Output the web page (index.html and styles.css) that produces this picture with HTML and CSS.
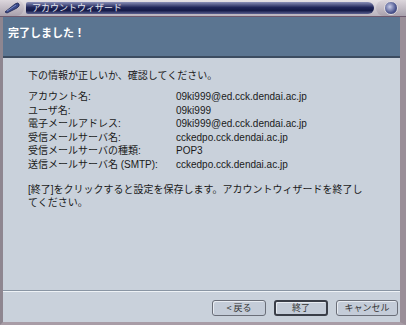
FILE: index.html
```html
<!DOCTYPE html>
<html lang="ja">
<head>
<meta charset="utf-8">
<link rel="stylesheet" href="styles.css">
</head>
<body>
<div class="window">
  <div class="titlebar">
    <div class="tb-left">
      <svg width="18" height="12" viewBox="0 0 18 12"><path d="M2 10 L12 2 Q15 0 16 2 Q17 4 14 6 L4 11 Z" fill="#3b4a8a" stroke="#1c2450" stroke-width="0.8"/><path d="M4 9 L13 3" stroke="#8a9ad0" stroke-width="0.8"/></svg>
    </div>
    <div class="tb-bar"><span class="tb-title">アカウントウィザード</span></div>
    <div class="tb-right"><span class="tb-btn"></span></div>
  </div>
  <div class="frame">
    <div class="header">完了しました！</div>
    <div class="content">
      <p class="intro">下の情報が正しいか、確認してください。</p>
      <div class="grid">
        <span>アカウント名:</span><span>09ki999@ed.cck.dendai.ac.jp</span>
        <span>ユーザ名:</span><span>09ki999</span>
        <span>電子メールアドレス:</span><span>09ki999@ed.cck.dendai.ac.jp</span>
        <span>受信メールサーバ名:</span><span>cckedpo.cck.dendai.ac.jp</span>
        <span>受信メールサーバの種類:</span><span>POP3</span>
        <span>送信メールサーバ名 (SMTP):</span><span>cckedpo.cck.dendai.ac.jp</span>
      </div>
      <p class="note">[終了]をクリックすると設定を保存します。アカウントウィザードを終了し<br>てください。</p>
    </div>
    <div class="footer">
      <button class="btn">&lt; 戻る</button>
      <button class="btn default">終了</button>
      <button class="btn">キャンセル</button>
    </div>
  </div>
</div>
</body>
</html>
```

FILE: styles.css
```css
html, body { margin: 0; padding: 0; }
body {
  width: 406px; height: 325px; overflow: hidden;
  font-family: "Liberation Sans", "Noto Sans CJK JP", sans-serif;
  font-size: 10px; color: #1a1a1a;
}
.window {
  width: 406px; height: 325px; display: flex; flex-direction: column;
  background: #c9d1db; box-sizing: border-box;
}
.titlebar {
  height: 16px; display: flex; align-items: center;
  background: linear-gradient(#e6e2e6, #b9b3bd);
  border-bottom: 1px solid #6e5a6e;
}
.tb-left {
  width: 24px; height: 16px; display: flex; align-items: center; justify-content: center;
  background: linear-gradient(#dcd6dc, #a8a0ac);
  border-radius: 0 8px 8px 0;
}
.tb-bar {
  flex: 1; height: 12px; margin: 0 2px;
  background: linear-gradient(#8a8fb8, #20265a 45%, #141a48 70%, #5a6090);
  border-radius: 2px 6px 6px 2px;
  display: flex; align-items: center;
}
.tb-title {
  color: #e8e8f0; font-size: 9px; padding-left: 6px; line-height: 12px;
  font-family: "Noto Sans CJK JP", sans-serif;
}
.tb-right {
  width: 30px; height: 16px; display: flex; align-items: center; justify-content: center;
  background: linear-gradient(#dcd6dc, #a8a0ac);
  border-radius: 8px 0 0 8px;
}
.tb-btn {
  width: 12px; height: 12px; border-radius: 50%;
  background: radial-gradient(circle at 40% 40%, #c8cce8, #4a548e 60%, #283060);
  border: 1px solid #e0dce0;
}
.frame {
  flex: 1; display: flex; flex-direction: column;
  border-left: 3px solid #8e8690;
  border-right: 6px solid #9a8e98;
  border-bottom: 3px solid #a89ca6;
}
.header {
  height: 41px; background: #5b7591; color: #fff;
  font-family: "Noto Sans CJK JP", sans-serif; font-weight: bold; font-size: 11px;
  padding: 7px 0 0 5px; box-sizing: border-box;
  border-bottom: 2px solid #3c4c60;
}
.content {
  flex: 1; padding: 11px 0 0 25px;
  font-family: "Liberation Sans", "Noto Sans CJK JP", sans-serif; font-size: 10px;
}
.intro { margin: 0 0 7px; line-height: 14px; }
.grid {
  display: grid; grid-template-columns: 148px auto; grid-auto-rows: 13.6px; line-height: 13.6px;
}
.note { margin: 11px 0 0; line-height: 13px; }
.footer {
  height: 29px; border-top: 1px solid #8a96a4; box-shadow: inset 0 1px 0 #eef2f6;
  display: flex; justify-content: flex-end; align-items: center; gap: 8px;
  padding-right: 2px; padding-top: 2px;
}
.btn {
  height: 16px; width: 54px; padding: 0; line-height: 12px;
  background: #c4ccd8; border: 1px solid #6a6e78; border-radius: 3px;
  font-family: "Noto Sans CJK JP", sans-serif; font-size: 9px; color: #333;
  box-shadow: inset 1px 1px 0 #e8ecf2;
  display: flex; align-items: center; justify-content: center;
}
.btn.default { border: 2px solid #3a3e48; }
.btn:last-child { width: 62px; }
```
